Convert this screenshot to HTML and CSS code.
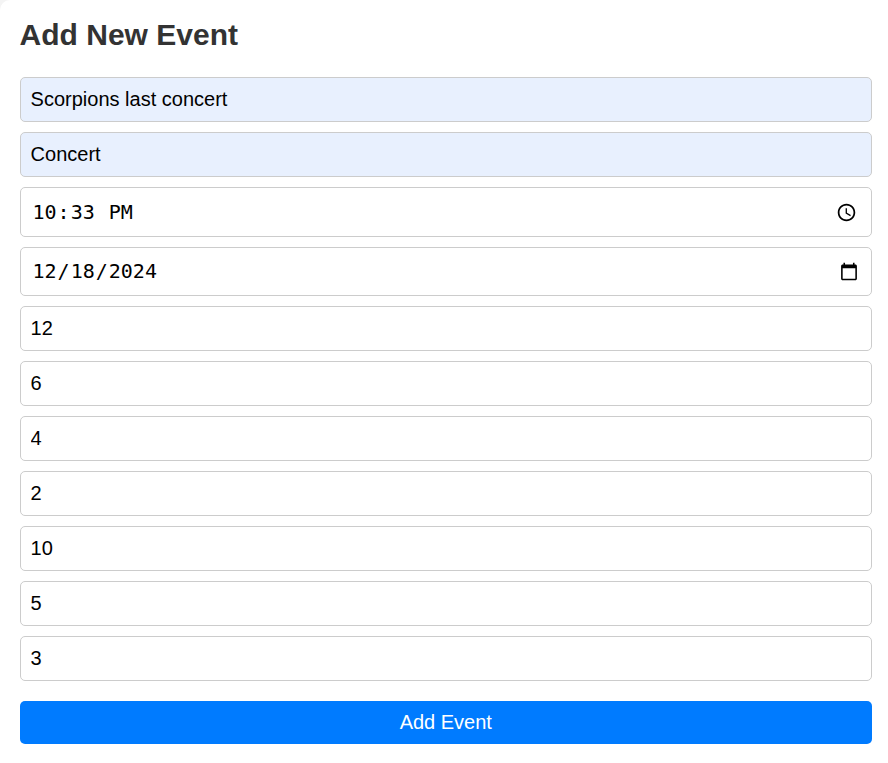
FILE: index.html
```html
<!DOCTYPE html>
<html lang="en">
<head>
<meta charset="utf-8">
<title>Add New Event</title>
<link rel="stylesheet" href="styles.css">
</head>
<body>
<form class="event-form">
  <h2 class="title">Add New Event</h2>
  <input class="field filled" type="text" value="Scorpions last concert">
  <input class="field filled" type="text" value="Concert">
  <input class="field time" type="time" value="22:33">
  <input class="field date" type="date" value="2024-12-18">
  <input class="field" type="number" value="12">
  <input class="field" type="number" value="6">
  <input class="field" type="number" value="4">
  <input class="field" type="number" value="2">
  <input class="field" type="number" value="10">
  <input class="field" type="number" value="5">
  <input class="field" type="number" value="3">
  <button class="submit" type="button">Add Event</button>
</form>
</body>
</html>
```

FILE: styles.css
```css
* { box-sizing: border-box; }
body {
  margin: 0;
  background: #f4f4f4;
  font-family: "Liberation Sans", Arial, sans-serif;
}
.event-form {
  display: flex;
  flex-direction: column;
  height: 763px;
  padding: 16px 16px 0 19.6px;
  background: #fff;
  border-radius: 10px 0 0 0;
}
.title {
  margin: 0 0 24px;
  font-size: 30px;
  line-height: 37px;
  color: #333;
}
.field {
  width: 100%;
  height: 45px;
  margin: 0 0 10px;
  padding: 10px;
  border: 1px solid #ccc;
  border-radius: 5px;
  background: #fff;
  color: #000;
  font-family: "Liberation Sans", Arial, sans-serif;
  font-size: 20px;
}
.filled { background: #e8f0fe; }
.time, .date {
  padding-left: 10.9px;
  font-family: "DejaVu Sans Mono", monospace;
}
.time { height: 50px; padding-right: 11px; }
.date { height: 49px; }
.date::-webkit-datetime-edit { transform: translateY(-1px); }
.submit {
  height: 43px;
  margin-top: 10px;
  border: 0;
  border-radius: 5px;
  background: #007bff;
  color: #fff;
  font-family: "Liberation Sans", Arial, sans-serif;
  font-size: 20px;
}
```
